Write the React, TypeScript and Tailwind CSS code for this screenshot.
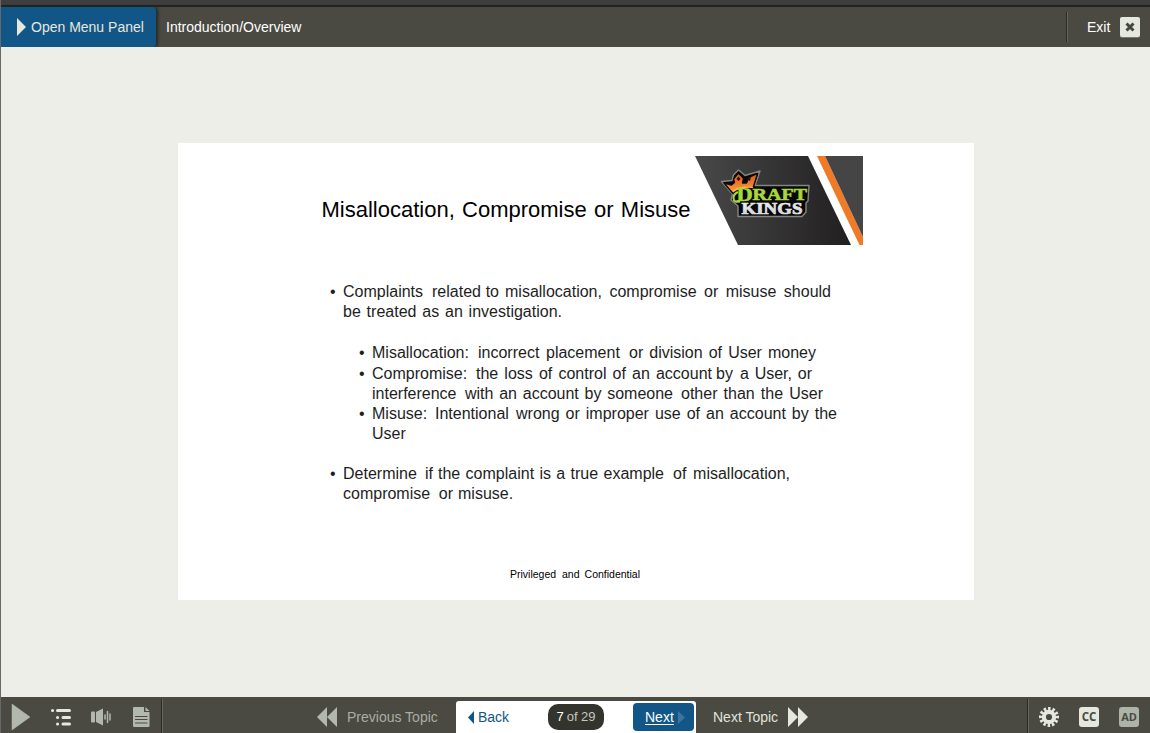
import type { ReactNode } from 'react';

function Line({ children }: { children: ReactNode }) {
  return <span className="flex h-5 leading-5 whitespace-nowrap">{children}</span>;
}

function Run({ className, children }: { className: string; children: ReactNode }) {
  return <span className={`block shrink-0 [text-align-last:justify] ${className}`}>{children} </span>;
}

function Bullet({ nested, children }: { nested?: boolean; children: ReactNode }) {
  return (
    <li className={`flex ${nested ? 'ml-[29px]' : ''}`}>
      <span className="w-[13px] shrink-0 leading-5">•</span>
      <div>{children}</div>
    </li>
  );
}

function BrandArt() {
  return (
    <svg width="169" height="90" viewBox="0 0 169 90" className="block" aria-label="Draft Kings">
      <defs>
        <linearGradient id="panel" x1="0" x2="1">
          <stop offset="0" stopColor="#494949" />
          <stop offset="1" stopColor="#211f20" />
        </linearGradient>
        <linearGradient id="crown" x1="0" y1="0" x2="0" y2="1">
          <stop offset="0" stopColor="#e0521f" />
          <stop offset="1" stopColor="#fba33b" />
        </linearGradient>
        <linearGradient id="silver" x1="0" y1="0" x2="0" y2="1">
          <stop offset="0" stopColor="#fff" />
          <stop offset="1" stopColor="#c6c7cb" />
        </linearGradient>
      </defs>
      <path d="M0 1H113L156 90H43Z" fill="url(#panel)" />
      <path d="M122 1H130L168 82V90H164.500Z" fill="#f07a26" />
      <path d="M130 1H168V82Z" fill="#454546" />
      <path d="M26.500 26.500L37 25.500L38.500 20L43.500 15L50 20.500L65 16L60 30.500H114L113 46L111 48V57L107 61.500H43V51L36 45L37.500 39Z" fill="#080808" stroke="#858585" strokeWidth="1.400" strokeLinejoin="round" />
      <path d="M29 28L36.500 30L39.500 27.500L38.500 24L43.500 18L48.500 23.500L47.500 28L51.500 28L54 22.500L62.500 18.500L58 33Q46 32 38 38.500Z" fill="url(#crown)" stroke="#130b07" strokeWidth="1.300" strokeLinejoin="round" />
      <path d="M41.500 24L43.500 21.500L45.500 24L43.500 26ZM51.500 24L56 21.500L55 26Z" fill="#21130c" />
      <path d="M38 36Q47 31 58 32.500" fill="none" stroke="#fdbb65" strokeWidth="1.200" />
      <path d="M43 37Q38.500 39 38.500 43Q38.500 48 45 46.500" fill="none" stroke="#a9d63a" strokeWidth="2" />
      <text x="41.500" y="46" textLength="70.500" lengthAdjust="spacingAndGlyphs" fontFamily="Liberation Serif, serif" fontWeight="700" fill="#a9d63a" stroke="#a9d63a" strokeWidth=".6"><tspan fontSize="19">D</tspan><tspan fontSize="17" dy="-1.500">RAFT</tspan></text>
      <text x="46.500" y="59" textLength="61" lengthAdjust="spacingAndGlyphs" fontFamily="Liberation Serif, serif" fontWeight="700" fontSize="17.500" fill="url(#silver)" stroke="#e4e4e7" strokeWidth=".7">KINGS</text>
    </svg>
  );
}

function Slide() {
  return (
    <main className="flex flex-1 justify-center bg-[#eeeee8] pt-24">
      <section className="h-[457px] w-[796px] bg-white text-[#1e1e1e]">
        <div className="flex h-[103px] pt-3 pl-[144px]">
          <h1 className="mt-[41px] h-[28px] w-[369px] whitespace-nowrap text-[22px] leading-[28px] text-black [text-align-last:justify]">
            Misallocation, Compromise or Misuse
          </h1>
          <div className="ml-[4px] w-[169px] shrink-0">
            <BrandArt />
          </div>
        </div>
        <ul className="mt-9 ml-[152.5px] text-[16px]">
          <Bullet>
            <Line>
              <Run className="w-[89px] [text-align-last:left]!">Complaints</Run>
              <Run className="mr-[6px] w-[67px]">related to</Run>
              <Run className="w-[326px]">misallocation, compromise or misuse should</Run>
            </Line>
            <Line><Run className="w-[219px]">be treated as an investigation.</Run></Line>
          </Bullet>
          <li className="h-[21px]" />
          <Bullet nested>
            <Line>
              <Run className="w-[106px] [text-align-last:left]!">Misallocation:</Run>
              <Run className="w-[68px] [text-align-last:left]!">incorrect</Run>
              <Run className="w-[83px] [text-align-last:left]!">placement</Run>
              <Run className="w-[187px]">or division of User money</Run>
            </Line>
          </Bullet>
          <li className="h-px" />
          <Bullet nested>
            <Line>
              <Run className="w-[104px] [text-align-last:left]!">Compromise:</Run>
              <Run className="mr-[4px] w-[236px]">the loss of control of an account</Run>
              <Run className="w-[24px] [text-align-last:left]!">by</Run>
              <Run className="w-[72px]">a User, or</Run>
            </Line>
            <Line>
              <Run className="w-[93px] [text-align-last:left]!">interference</Run>
              <Run className="mr-[8px] w-[208px]">with an account by someone</Run>
              <Run className="w-[142px]">other than the User</Run>
            </Line>
          </Bullet>
          <Bullet nested>
            <Line>
              <Run className="w-[63px] [text-align-last:left]!">Misuse:</Run>
              <Run className="w-[81px] [text-align-last:left]!">Intentional</Run>
              <Run className="w-[321px]">wrong or improper use of an account by the</Run>
            </Line>
            <Line>User</Line>
          </Bullet>
          <li className="h-5" />
          <Bullet>
            <Line>
              <Run className="w-[82px] [text-align-last:left]!">Determine</Run>
              <Run className="w-[13px] [text-align-last:left]!">if</Run>
              <Run className="mr-[9px] w-[226px]">the complaint is a true example</Run>
              <Run className="w-[117px]">of misallocation,</Run>
            </Line>
            <Line>
              <Run className="mr-[5px] w-[110px]">compromise or</Run>
              <Run className="w-[55px] [text-align-last:left]!">misuse.</Run>
            </Line>
          </Bullet>
        </ul>
        <p className="mt-[62px] ml-[332.5px] flex text-[10.500px] leading-4 text-black">
          <Run className="w-[52px] [text-align-last:left]!">Privileged</Run>
          <Run className="w-[78px]">and Confidential</Run>
        </p>
      </section>
    </main>
  );
}

function Separator() {
  return <div className="w-[2px] shrink-0 border-r border-l border-r-[#66665f] border-l-[#2c2c27]" />;
}

function Header() {
  return (
    <header className="flex h-10 shrink-0 bg-[#4a4a42] text-[14px] text-white">
      <button className="flex w-[155px] items-center rounded-r-[4px] bg-[#125687] pl-4 text-[#e5e8df] shadow-[2px_0_3px_#292925]">
        <svg width="9" height="18" viewBox="0 0 9 18"><path d="M0 0L9 9L0 18Z" fill="#e5e8df" /></svg>
        <span className="ml-[5px] whitespace-nowrap">Open Menu Panel</span>
      </button>
      <div className="flex flex-1 items-center pl-[10px]">Introduction/Overview</div>
      <div className="flex py-[5px]"><Separator /></div>
      <button className="flex w-[82px] items-center pl-[19px]">
        Exit
        <span className="ml-[10px] flex size-5 items-center justify-center rounded-[2px] bg-[#e5e8df] shadow-[0_1px_0_#777a73]">
          <svg width="10" height="10" viewBox="0 0 10 10"><path d="M1.500 1.500L8.500 8.500M8.500 1.500L1.500 8.500" stroke="#45463e" strokeWidth="3" /></svg>
        </span>
      </button>
    </header>
  );
}

function PlaybackTools() {
  return (
    <div className="flex w-[160px] items-center">
      <svg width="160" height="36" viewBox="0 0 160 36">
        <path d="M11 7L29 20L11 33Z" fill="#b3b8ac" stroke="#b3b8ac" strokeWidth=".5" strokeLinejoin="round" />
        <g stroke="#e5e8df" strokeWidth="3" strokeLinecap="round">
          <path d="M56.500 13.500H68.500M62 20.500H68.500M62 27H68.500" />
          <path d="M51.500 13.500H51.600M56.500 20.500H56.600M56.500 27H56.600" />
        </g>
        <g fill="#b3b8ac">
          <rect x="90" y="14.500" width="4" height="11" rx="1" />
          <path d="M95 15L102 11.500V28.500L95 25Z" />
          <path d="M104 18V22M106.500 14.500V25.500M109 17V23" fill="none" stroke="#b3b8ac" strokeWidth="1.500" strokeLinecap="round" />
          <path d="M133 10H143V15H148.500V29Q148.500 30 147.500 30H133Q132 30 132 29V11Q132 10 133 10Z" />
          <path d="M144.500 10L148.500 14H144.500Z" />
        </g>
        <path d="M134.500 19.500H146M134.500 22.500H146M134.500 26H146" stroke="#4a4a42" strokeWidth="1.200" strokeLinecap="round" />
      </svg>
    </div>
  );
}

function SettingsTools() {
  return (
    <div className="flex w-[121px] items-center gap-5 pt-1 pl-[10px]">
      <svg width="20" height="20" viewBox="-10 -10 20 20">
        <circle r="7.200" fill="#e5e8df" />
        <circle r="8" fill="none" stroke="#e5e8df" strokeWidth="4" strokeDasharray="2.350 1.839" transform="rotate(-8)" />
        <circle r="3.100" fill="#4a4a42" />
      </svg>
      <span className="flex size-5 items-center justify-center rounded-[3px] bg-[#e5e8df] font-['Open_Sans',sans-serif] text-[11.500px] font-bold text-[#4a4a42]">CC</span>
      <span className="flex size-5 items-center justify-center rounded-[3px] bg-[#aeb3a8] font-['Open_Sans',sans-serif] text-[11px] font-bold text-[#4a4a42]">AD</span>
    </div>
  );
}

function Footer() {
  return (
    <footer className="flex h-9 shrink-0 bg-[#4a4a42] text-[14px]">
      <PlaybackTools />
      <div className="flex pt-[2px]"><Separator /></div>
      <nav className="flex flex-1 pt-1 pl-[154px]">
        <button className="flex h-8 w-[139px] items-center text-[#a9ada2]">
          <svg width="20" height="20" viewBox="0 0 20 20"><path d="M10 0V20L0 10ZM20 0V20L10 10Z" fill="#b3b8ac" /></svg>
          <span className="ml-[10px] whitespace-nowrap">Previous Topic</span>
        </button>
        <div className="flex h-8 w-[240px] items-center rounded-t-[3px] bg-white">
          <button className="flex w-[92px] items-center pl-3 text-[#125687]">
            <svg width="6" height="13" viewBox="0 0 6 13"><path d="M6 0V13L0 6.500Z" fill="#125687" /></svg>
            <span className="ml-1">Back</span>
          </button>
          <div className="flex h-[26px] w-14 items-center justify-center rounded-[10px] bg-[#32342d] text-[13px] whitespace-nowrap text-[#c4c7bd]">
            <span className="mr-[3px] text-white">7</span>of 29
          </div>
          <button className="ml-[29px] flex h-7 w-[61px] items-center rounded-[4px] bg-[#125687] pl-3 text-white">
            <span className="underline underline-offset-2">Next</span>
            <svg className="ml-1" width="7" height="13" viewBox="0 0 7 13"><path d="M0 0L7 6.500L0 13Z" fill="#3c759d" /></svg>
          </button>
        </div>
        <button className="flex h-8 items-center pl-[17px] text-[#e0e3d9]">
          <span className="w-[66px] text-left whitespace-nowrap">Next Topic</span>
          <svg className="ml-[9px]" width="20" height="20" viewBox="0 0 20 20"><path d="M0 0L10 10L0 20ZM10 0L20 10L10 20Z" fill="#e5e8df" /></svg>
        </button>
      </nav>
      <div className="flex pt-[2px]"><Separator /></div>
      <SettingsTools />
    </footer>
  );
}

export default function App() {
  return (
    <div className="flex h-[733px] w-[1150px] flex-col overflow-hidden border-l border-[#686868] font-['Liberation_Sans',Arial,sans-serif]">
      <div className="h-[7px] shrink-0 border-b-2 border-[#222] bg-[#3e3e3e]" />
      <Header />
      <Slide />
      <Footer />
    </div>
  );
}
